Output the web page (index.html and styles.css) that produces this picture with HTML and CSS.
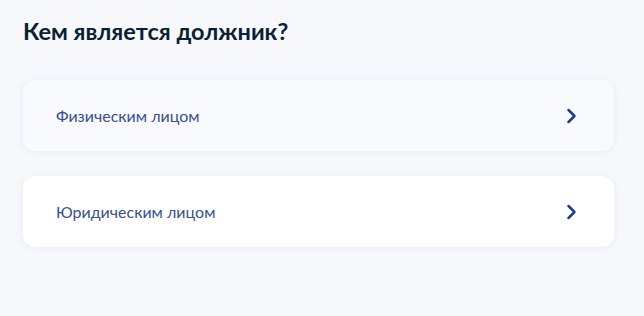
FILE: index.html
```html
<!DOCTYPE html>
<html lang="ru">
<head>
  <meta charset="UTF-8">
  <meta name="viewport" content="width=device-width, initial-scale=1.0">
  <title>Кем является должник?</title>
  <link rel="stylesheet" href="styles.css">
</head>
<body>
  <div id="debtor-step">
    <h2 class="step-title">Кем является должник?</h2>
    <div class="choice-list">
      <a class="choice first" href="#">
        <span>Физическим лицом</span>
        <svg class="chevron" width="12" height="18" viewBox="0 0 12 18"><path d="M2.5 3 L8.5 9 L2.5 15" fill="none" stroke="#1f3f91" stroke-width="2.5" stroke-linecap="round" stroke-linejoin="round"/></svg>
      </a>
      <a class="choice" href="#">
        <span>Юридическим лицом</span>
        <svg class="chevron" width="12" height="18" viewBox="0 0 12 18"><path d="M2.5 3 L8.5 9 L2.5 15" fill="none" stroke="#1f3f91" stroke-width="2.5" stroke-linecap="round" stroke-linejoin="round"/></svg>
      </a>
    </div>
  </div>
</body>
</html>
```

FILE: styles.css
```css
body, html {
  margin: 0;
  padding: 0;
  height: 100%;
  font-family: Lato, "Noto Sans", sans-serif;
  background-color: #f6f8fc;
}
#debtor-step {
  padding: 15px 30px 0 23px;
}
.step-title {
  margin: 0 0 32px;
  font-size: 23.5px;
  line-height: 33px;
  font-weight: 700;
  color: #0b1f33;
}
.choice-list {
  display: flex;
  flex-direction: column;
  gap: 25px;
}
.choice {
  display: flex;
  justify-content: space-between;
  align-items: center;
  height: 71px;
  padding: 0 36px 0 33px;
  border-radius: 12px;
  background-color: #fff;
  box-shadow: 0 1px 6px rgba(40, 60, 120, 0.07);
  color: #3b4f8c;
  font-size: 16px;
  text-decoration: none;
}
.choice.first {
  background-color: #f9fafe;
}
.chevron {
  display: block;
}
```
